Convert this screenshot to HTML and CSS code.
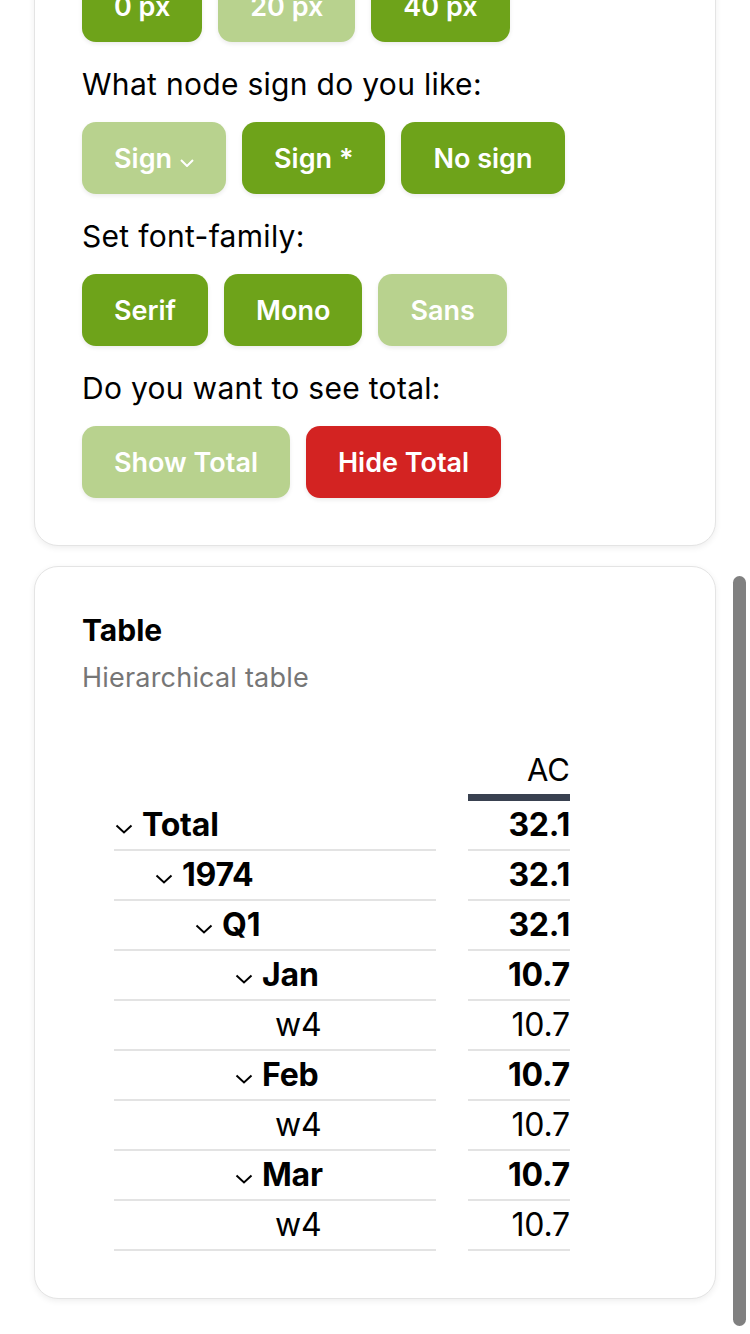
FILE: index.html
```html
<!DOCTYPE html>
<html lang="en">
<head>
<meta charset="utf-8">
<title>Hierarchical table</title>
<link rel="stylesheet" href="styles.css">
</head>
<body>
<main class="page">
  <section class="card settings">
    <p class="label">Set padding:</p>
    <div class="btn-row">
      <button class="btn on">0 px</button>
      <button class="btn off">20 px</button>
      <button class="btn on">40 px</button>
    </div>
    <p class="label">What node sign do you like:</p>
    <div class="btn-row">
      <button class="btn off">Sign <svg class="btn-chev" viewBox="0 0 14 8"><polyline points="1,1 7,7 13,1"/></svg></button>
      <button class="btn on">Sign *</button>
      <button class="btn on">No sign</button>
    </div>
    <p class="label">Set font-family:</p>
    <div class="btn-row">
      <button class="btn on">Serif</button>
      <button class="btn on">Mono</button>
      <button class="btn off">Sans</button>
    </div>
    <p class="label">Do you want to see total:</p>
    <div class="btn-row">
      <button class="btn off">Show Total</button>
      <button class="btn danger">Hide Total</button>
    </div>
  </section>

  <section class="card table-card">
    <h2 class="title">Table</h2>
    <p class="subtitle">Hierarchical table</p>
    <div class="htable">
      <div class="hcell head-empty"></div>
      <div class="hcell head">AC</div>

      <div class="cell name lvl0 bold"><svg class="chev" viewBox="0 0 18 10"><polyline points="1.5,1.5 9,8.5 16.5,1.5"/></svg>Total</div>
      <div class="cell val bold">32.1</div>

      <div class="cell name lvl1 bold"><svg class="chev" viewBox="0 0 18 10"><polyline points="1.5,1.5 9,8.5 16.5,1.5"/></svg>1974</div>
      <div class="cell val bold">32.1</div>

      <div class="cell name lvl2 bold"><svg class="chev" viewBox="0 0 18 10"><polyline points="1.5,1.5 9,8.5 16.5,1.5"/></svg>Q1</div>
      <div class="cell val bold">32.1</div>

      <div class="cell name lvl3 bold"><svg class="chev" viewBox="0 0 18 10"><polyline points="1.5,1.5 9,8.5 16.5,1.5"/></svg>Jan</div>
      <div class="cell val bold">10.7</div>

      <div class="cell name lvl4">w4</div>
      <div class="cell val">10.7</div>

      <div class="cell name lvl3 bold"><svg class="chev" viewBox="0 0 18 10"><polyline points="1.5,1.5 9,8.5 16.5,1.5"/></svg>Feb</div>
      <div class="cell val bold">10.7</div>

      <div class="cell name lvl4">w4</div>
      <div class="cell val">10.7</div>

      <div class="cell name lvl3 bold"><svg class="chev" viewBox="0 0 18 10"><polyline points="1.5,1.5 9,8.5 16.5,1.5"/></svg>Mar</div>
      <div class="cell val bold">10.7</div>

      <div class="cell name lvl4">w4</div>
      <div class="cell val">10.7</div>
    </div>
  </section>
</main>
<div class="scroll-thumb"></div>
</body>
</html>
```
FILE: styles.css
```css
* { box-sizing: border-box; }
html, body { margin: 0; padding: 0; background: #ffffff; }
body {
  font-family: Inter, "Noto Sans", "Liberation Sans", sans-serif;
  color: #000;
  overflow: hidden;
  height: 1334px;
  position: relative;
}
.page {
  display: flex;
  flex-direction: column;
  gap: 20px;
  padding: 0 34px;
  margin-top: -140px;
}
.card {
  background: #fff;
  border: 1px solid #e4e4e4;
  border-radius: 24px;
  box-shadow: 0 2px 6px rgba(0,0,0,0.07);
  padding: 47px;
}
.label {
  margin: 18px 0 14px;
  font-size: 30px;
  line-height: 48px;
  letter-spacing: 0.3px;
}
.settings .label:first-child { margin-top: 0; }
.btn-row {
  display: flex;
  gap: 16px;
}
.btn {
  height: 72px;
  padding: 0 32px;
  border: none;
  border-radius: 14px;
  font-family: inherit;
  font-size: 27px;
  font-weight: 600;
  color: #fff;
  display: flex;
  align-items: center;
  gap: 8px;
  box-shadow: 0 2px 4px rgba(0,0,0,0.08);
}
.btn.on { background: #6ea31a; }
.btn.off { background: #b8d28e; }
.btn.danger { background: #d32322; }
.btn-chev {
  width: 14px;
  height: 8px;
  margin-top: 10px;
  fill: none;
  stroke: #fff;
  stroke-width: 2;
}
.title {
  margin: 0;
  font-size: 30px;
  line-height: 32px;
  font-weight: 700;
}
.subtitle {
  margin: 16px 0 0;
  font-size: 27px;
  line-height: 32px;
  color: #767676;
  letter-spacing: 0.2px;
}
.htable {
  display: grid;
  grid-template-columns: 322px 102px;
  column-gap: 32px;
  margin: 58px 0 0 32px;
}
.hcell.head {
  font-size: 31px;
  line-height: 36px;
  text-align: right;
  padding-bottom: 6px;
  border-bottom: 7px solid #394150;
}
.cell {
  height: 50px;
  border-bottom: 2px solid #e3e3e3;
  font-size: 32px;
  line-height: 48px;
  display: flex;
  align-items: center;
  letter-spacing: -0.2px;
}
.cell.bold { font-weight: 700; }
.cell.val { justify-content: flex-end; }
.chev {
  width: 18px;
  height: 10px;
  margin: 8px 9px 0 1px;
  fill: none;
  stroke: #000;
  stroke-width: 2;
  flex: none;
}
.lvl0 { padding-left: 0; }
.lvl1 { padding-left: 40px; }
.lvl2 { padding-left: 80px; }
.lvl3 { padding-left: 120px; }
.lvl4 { padding-left: 161px; }
.scroll-thumb {
  position: absolute;
  right: 4px;
  top: 576px;
  width: 13px;
  height: 750px;
  border-radius: 7px;
  background: #808080;
}
```
